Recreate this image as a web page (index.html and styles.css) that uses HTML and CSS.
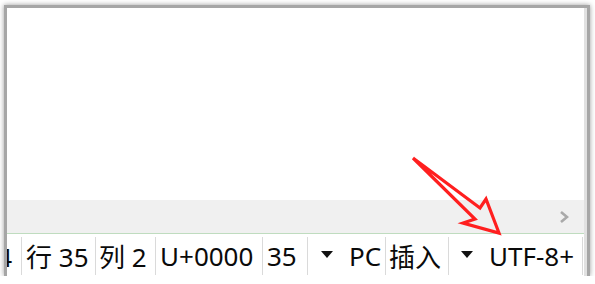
FILE: index.html
```html
<!DOCTYPE html>
<html lang="zh-CN">
<head>
    <meta charset="UTF-8">
    <meta name="viewport" content="width=device-width, initial-scale=1.0">
    <title>状态栏 编码</title>
    <link rel="stylesheet" href="styles.css">
</head>
<body>
    <div class="window">
        <div class="inner">
            <div class="editor"></div>
            <div class="hscroll">
                <svg class="chevron" width="10" height="12" viewBox="0 0 10 12">
                    <polyline points="2,1 8,6 2,11" fill="none" stroke="#a9a9a9" stroke-width="2.6"/>
                </svg>
            </div>
            <div class="statusbar">
                <div class="cell cell-sel">选择 1234</div>
                <div class="cell cell-line">行 35</div>
                <div class="cell cell-col">列 2</div>
                <div class="cell cell-code">U+0000</div>
                <div class="cell cell-num">35</div>
                <div class="cell cell-eol">
                    <svg class="tri" width="12" height="8" viewBox="0 0 12 8"><polygon points="0,0 12,0 6,7" fill="#111"/></svg>
                    <span>PC</span>
                </div>
                <div class="cell cell-mode">插入</div>
                <div class="cell cell-enc">
                    <svg class="tri" width="12" height="8" viewBox="0 0 12 8"><polygon points="0,0 12,0 6,7" fill="#111"/></svg>
                    <span>UTF-8+</span>
                </div>
            </div>
        </div>
    </div>

    <!-- red annotation arrow pointing at the encoding -->
    <svg class="annotation" width="595" height="284" viewBox="0 0 595 284">
        <polygon points="413,158 480,208 486,199 499,233 463,223 475,219"
                 fill="none" stroke="#ff1f1f" stroke-width="3.2" stroke-linejoin="miter"/>
    </svg>
</body>
</html>
```

FILE: styles.css
```css
body {
    margin: 0;
    background: #fff;
    font-family: "Noto Sans", "Noto Sans CJK SC", sans-serif;
    color: #0a0a0a;
}
.window {
    margin: 5px 0 0 4px;
    width: 580px;
    border: 3px solid #a6a6a6;
    border-bottom: 0;
    box-shadow: 0 0 5px rgba(0, 0, 0, 0.4);
}
.inner {
    border-right: 3px solid #e1e1e1;
}
.editor {
    height: 192px;
    background: #fff;
}
.hscroll {
    height: 33px;
    background: #f0f0f0;
    display: flex;
    align-items: center;
    justify-content: flex-end;
    padding-right: 15px;
}
.chevron { display: block; margin-top: 1px; }
.statusbar {
    height: 43px;
    border-top: 1px solid #bfdcbf;
    background: #fff;
    display: flex;
    justify-content: flex-end;
    overflow: hidden;
    padding: 3px 1px 1px 0;
    box-sizing: border-box;
    font-size: 26px;
    white-space: nowrap;
}
.cell {
    flex-shrink: 0;
    box-sizing: border-box;
    display: flex;
    align-items: center;
    border-left: 1px solid #dadada;
    padding-left: 4px;
    padding-bottom: 1px;
}
.cell-sel {
    width: 90px;
    border-left: 0;
    justify-content: flex-end;
    padding-right: 9px;
}
.cell-line { width: 74px; }
.cell-col { width: 60px; padding-left: 3px; }
.cell-code { width: 107px; padding-left: 4px; }
.cell-num { width: 45px; }
.cell-eol { width: 78px; padding-left: 13px; }
.cell-mode { width: 63px; padding-left: 3px; }
.cell-enc {
    width: 135px;
    padding-left: 12px;
    border-right: 1px solid #dadada;
}
.tri {
    display: block;
    margin-right: 16px;
    margin-top: -2px;
}
.annotation {
    position: absolute;
    top: 0;
    left: 0;
    pointer-events: none;
}
```
